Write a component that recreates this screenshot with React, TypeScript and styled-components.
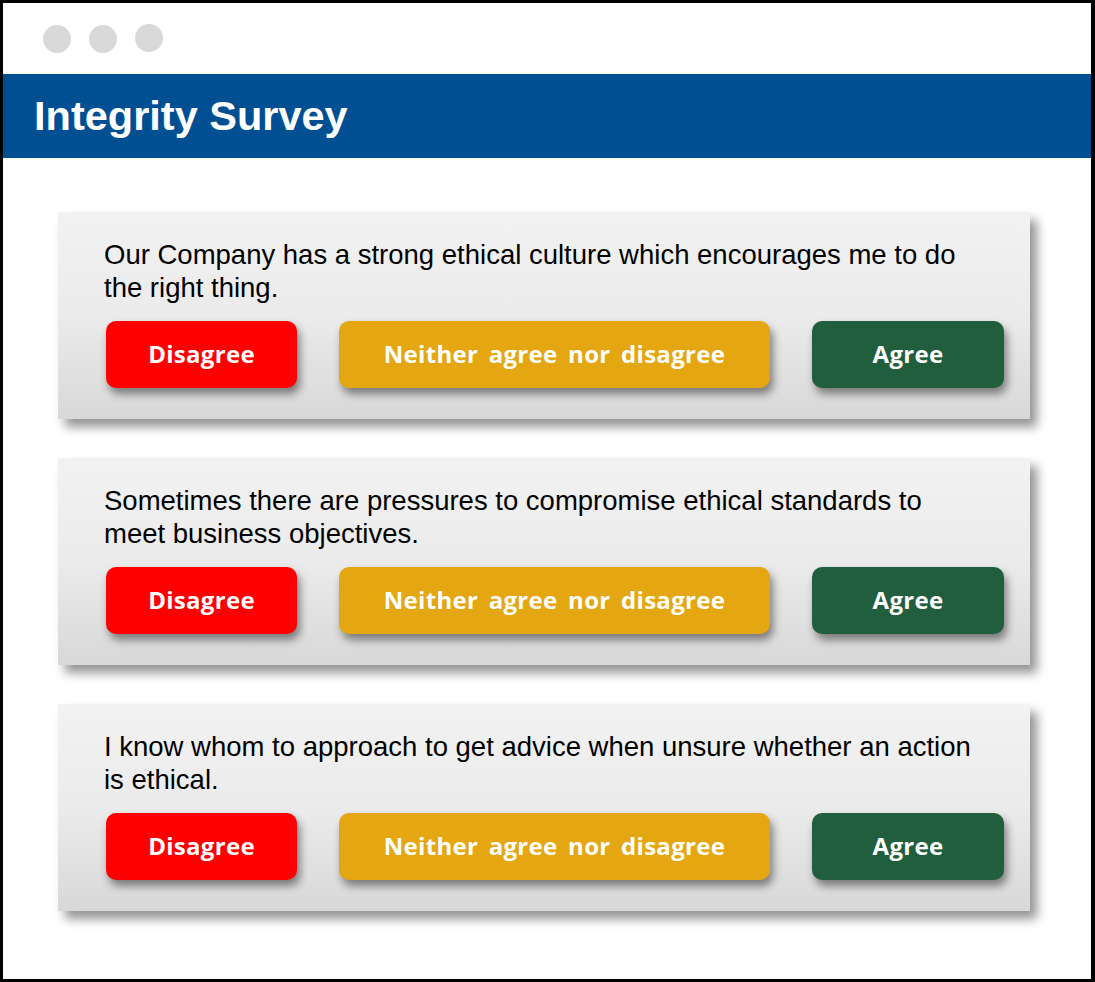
import React from "react";
import styled, { createGlobalStyle } from "styled-components";

const Global = createGlobalStyle`
  html, body { margin: 0; padding: 0; background: #fff; }
  body { font-family: "Liberation Sans", Arial, sans-serif; }
`;

const Frame = styled.div`
  width: 1095px;
  height: 982px;
  box-sizing: border-box;
  border-style: solid;
  border-color: #000;
  border-width: 3px 4px 3px 3px;
  background: #fff;
  display: flex;
  flex-direction: column;
  overflow: hidden;
`;

const TopBar = styled.div`
  height: 71px;
  display: flex;
  align-items: center;
  gap: 18px;
  padding: 0 0 0 40px;
  box-sizing: border-box;
`;

const Dot = styled.span<{ $up?: number }>`
  width: 28px;
  height: 28px;
  border-radius: 50%;
  background: #d9d9d9;
  margin-top: ${(p) => (p.$up ? -p.$up * 2 : 0)}px;
`;

const Header = styled.div`
  height: 84px;
  background: #004f93;
  display: flex;
  align-items: center;
  padding-left: 31px;
`;

const Title = styled.h1`
  margin: 0;
  color: #fff;
  font-family: "Liberation Sans", Arial, sans-serif;
  font-weight: 700;
  font-size: 41.5px;
  line-height: 1;
`;

const Content = styled.div`
  display: flex;
  flex-direction: column;
  gap: 39px;
  padding: 54px 0 0 55px;
`;

const Card = styled.section`
  width: 972px;
  height: 207px;
  box-sizing: border-box;
  padding: 26px 26px 0 46px;
  background: linear-gradient(to bottom, #f2f2f2 0%, #ebebeb 50%, #d8d8d8 100%);
  box-shadow: 7px 8px 10px rgba(0, 0, 0, 0.42);
  display: flex;
  flex-direction: column;
`;

const Question = styled.p`
  margin: 0;
  padding-right: 18px;
  height: 66px;
  font-family: "Liberation Sans", Arial, sans-serif;
  font-size: 27.5px;
  line-height: 33px;
  color: #000;
`;

const Options = styled.div`
  display: flex;
  gap: 42px;
  margin-top: 17px;
  padding-left: 2px;
`;

const Choice = styled.button<{ $bg: string; $w: number }>`
  width: ${(p) => p.$w}px;
  height: 67px;
  border: none;
  border-radius: 10px;
  background: ${(p) => p.$bg};
  color: #fff;
  font-family: "Open Sans", sans-serif;
  font-weight: 700;
  font-size: 24px;
  letter-spacing: 0.3px;
  word-spacing: 4px;
  box-shadow: 3px 6px 8px rgba(0, 0, 0, 0.45);
  display: flex;
  align-items: center;
  justify-content: center;
  padding: 0 0 2px;
  cursor: pointer;
`;

const questions = [
  "Our Company has a strong ethical culture which encourages me to do the right thing.",
  "Sometimes there are pressures to compromise ethical standards to meet business objectives.",
  "I know whom to approach to get advice when unsure whether an action is ethical.",
];

export default function App() {
  return (
    <>
      <Global />
      <Frame>
        <TopBar>
          <Dot />
          <Dot />
          <Dot $up={1} />
        </TopBar>
        <Header>
          <Title>Integrity Survey</Title>
        </Header>
        <Content>
          {questions.map((q) => (
            <Card key={q}>
              <Question>{q}</Question>
              <Options>
                <Choice $bg="#ff0000" $w={191}>Disagree</Choice>
                <Choice $bg="#e5a711" $w={431}>Neither agree nor disagree</Choice>
                <Choice $bg="#215e3d" $w={192}>Agree</Choice>
              </Options>
            </Card>
          ))}
        </Content>
      </Frame>
    </>
  );
}
